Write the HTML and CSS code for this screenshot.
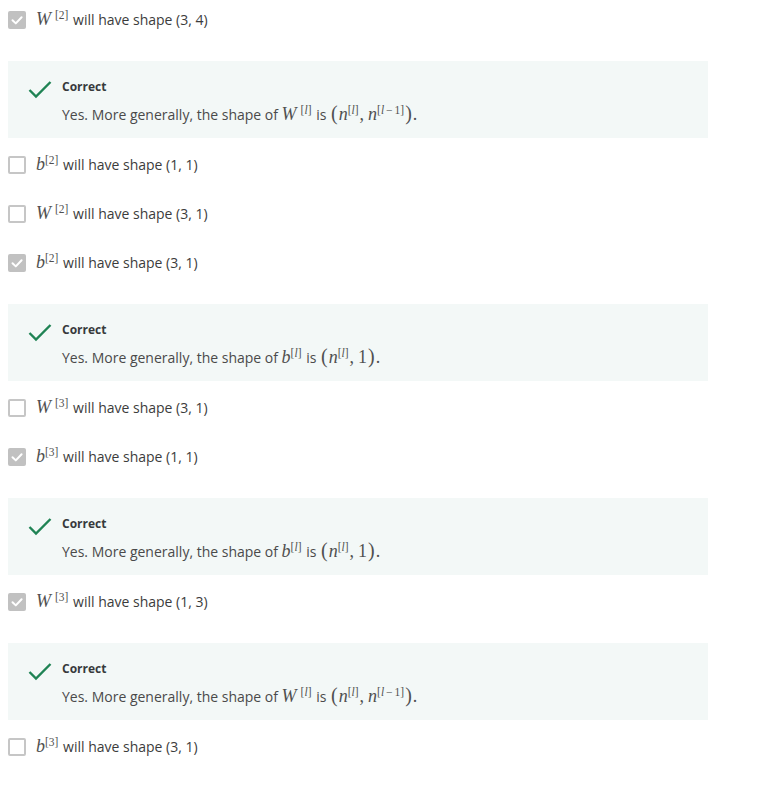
FILE: index.html
```html
<!DOCTYPE html>
<html>
<head>
<meta charset="utf-8">
<link rel="stylesheet" href="styles.css">
</head>
<body>
<div class="quiz">
  <div class="option">
    <span class="box checked"><svg viewBox="0 0 18 18" width="18" height="18"><path d="M4.5 9.2 L7.8 12.4 L13.6 6.2" fill="none" stroke="#fff" stroke-width="2" stroke-linecap="round" stroke-linejoin="round"/></svg></span>
    <span class="label"><span class="m"><i class="v">W</i><sup>[2]</sup></span> will have shape (3, 4)</span>
  </div>
  <div class="feedback">
    <svg class="ok" viewBox="0 0 24 24" width="24" height="24"><path d="M1.5 13 L8 19.5 L22.5 5" fill="none" stroke="#1f8354" stroke-width="2.4"/></svg>
    <div class="fb-body">
      <div class="title">Correct</div>
      <div class="text">Yes. More generally, the shape of <span class="m"><i class="v">W</i><sup>[<i>l</i>]</sup></span> is <span class="m"><span class="p">(</span><i>n</i><sup>[<i>l</i>]</sup><span class="c">,</span><i>n</i><sup>[<i>l</i><span class="op">−</span>1]</sup><span class="p">)</span>.</span></div>
    </div>
  </div>
  <div class="option">
    <span class="box"></span>
    <span class="label"><span class="m"><i>b</i><sup>[2]</sup></span> will have shape (1, 1)</span>
  </div>
  <div class="option">
    <span class="box"></span>
    <span class="label"><span class="m"><i class="v">W</i><sup>[2]</sup></span> will have shape (3, 1)</span>
  </div>
  <div class="option">
    <span class="box checked"><svg viewBox="0 0 18 18" width="18" height="18"><path d="M4.5 9.2 L7.8 12.4 L13.6 6.2" fill="none" stroke="#fff" stroke-width="2" stroke-linecap="round" stroke-linejoin="round"/></svg></span>
    <span class="label"><span class="m"><i>b</i><sup>[2]</sup></span> will have shape (3, 1)</span>
  </div>
  <div class="feedback">
    <svg class="ok" viewBox="0 0 24 24" width="24" height="24"><path d="M1.5 13 L8 19.5 L22.5 5" fill="none" stroke="#1f8354" stroke-width="2.4"/></svg>
    <div class="fb-body">
      <div class="title">Correct</div>
      <div class="text">Yes. More generally, the shape of <span class="m"><i>b</i><sup>[<i>l</i>]</sup></span> is <span class="m"><span class="p">(</span><i>n</i><sup>[<i>l</i>]</sup><span class="c">,</span>1<span class="p">)</span>.</span></div>
    </div>
  </div>
  <div class="option">
    <span class="box"></span>
    <span class="label"><span class="m"><i class="v">W</i><sup>[3]</sup></span> will have shape (3, 1)</span>
  </div>
  <div class="option">
    <span class="box checked"><svg viewBox="0 0 18 18" width="18" height="18"><path d="M4.5 9.2 L7.8 12.4 L13.6 6.2" fill="none" stroke="#fff" stroke-width="2" stroke-linecap="round" stroke-linejoin="round"/></svg></span>
    <span class="label"><span class="m"><i>b</i><sup>[3]</sup></span> will have shape (1, 1)</span>
  </div>
  <div class="feedback">
    <svg class="ok" viewBox="0 0 24 24" width="24" height="24"><path d="M1.5 13 L8 19.5 L22.5 5" fill="none" stroke="#1f8354" stroke-width="2.4"/></svg>
    <div class="fb-body">
      <div class="title">Correct</div>
      <div class="text">Yes. More generally, the shape of <span class="m"><i>b</i><sup>[<i>l</i>]</sup></span> is <span class="m"><span class="p">(</span><i>n</i><sup>[<i>l</i>]</sup><span class="c">,</span>1<span class="p">)</span>.</span></div>
    </div>
  </div>
  <div class="option">
    <span class="box checked"><svg viewBox="0 0 18 18" width="18" height="18"><path d="M4.5 9.2 L7.8 12.4 L13.6 6.2" fill="none" stroke="#fff" stroke-width="2" stroke-linecap="round" stroke-linejoin="round"/></svg></span>
    <span class="label"><span class="m"><i class="v">W</i><sup>[3]</sup></span> will have shape (1, 3)</span>
  </div>
  <div class="feedback">
    <svg class="ok" viewBox="0 0 24 24" width="24" height="24"><path d="M1.5 13 L8 19.5 L22.5 5" fill="none" stroke="#1f8354" stroke-width="2.4"/></svg>
    <div class="fb-body">
      <div class="title">Correct</div>
      <div class="text">Yes. More generally, the shape of <span class="m"><i class="v">W</i><sup>[<i>l</i>]</sup></span> is <span class="m"><span class="p">(</span><i>n</i><sup>[<i>l</i>]</sup><span class="c">,</span><i>n</i><sup>[<i>l</i><span class="op">−</span>1]</sup><span class="p">)</span>.</span></div>
    </div>
  </div>
  <div class="option">
    <span class="box"></span>
    <span class="label"><span class="m"><i>b</i><sup>[3]</sup></span> will have shape (3, 1)</span>
  </div>
</div>
</body>
</html>
```

FILE: styles.css
```css
html, body {
  margin: 0;
  padding: 0;
  background: #fff;
}
body {
  padding: 8px;
  font-family: "Open Sans", "Liberation Sans", sans-serif;
  font-size: 14px;
  color: #373a3c;
}
.quiz {
  width: 700px;
  display: flex;
  flex-direction: column;
}
.option {
  display: flex;
  align-items: center;
  gap: 10px;
  height: 22px;
  margin-bottom: 27px;
}
.option:last-child {
  margin-bottom: 0;
}
.box {
  width: 18px;
  height: 18px;
  box-sizing: border-box;
  border: 2px solid #c6c6c6;
  border-radius: 2px;
  flex: none;
  display: flex;
  align-items: center;
  justify-content: center;
  margin-top: 1px;
}
.box.checked {
  background: #c1c1c1;
  border: none;
}
.label {
  line-height: 22px;
  white-space: nowrap;
  color: #3c3c3c;
}
.m {
  font-family: "Liberation Serif", "Times New Roman", serif;
  font-size: 18px;
  color: #505050;
  margin-right: 1px;
}
.m i {
  font-style: italic;
}
.m .v {
  margin-right: 4px;
}
.m sup {
  font-size: 11.5px;
  font-style: normal;
  vertical-align: 6px;
  line-height: 0;
}
.m .c {
  margin: 0 4px 0 1px;
}
.m .op {
  margin: 0 2px;
}
.m .p {
  font-size: 20px;
  margin: 0 1px;
}
.feedback {
  margin-top: 4px;
  margin-bottom: 15px;
  background: #f3f8f7;
  height: 77px;
  box-sizing: border-box;
  padding: 16px 20px 0 20px;
  display: flex;
  align-items: flex-start;
  gap: 10px;
}
.ok {
  flex: none;
}
.fb-body {
  display: flex;
  flex-direction: column;
}
.title {
  font-size: 12px;
  font-weight: 700;
  line-height: 20px;
  color: #373a3c;
}
.text {
  margin-top: 4px;
  line-height: 24px;
  color: #4a4a4a;
  white-space: nowrap;
}
```
